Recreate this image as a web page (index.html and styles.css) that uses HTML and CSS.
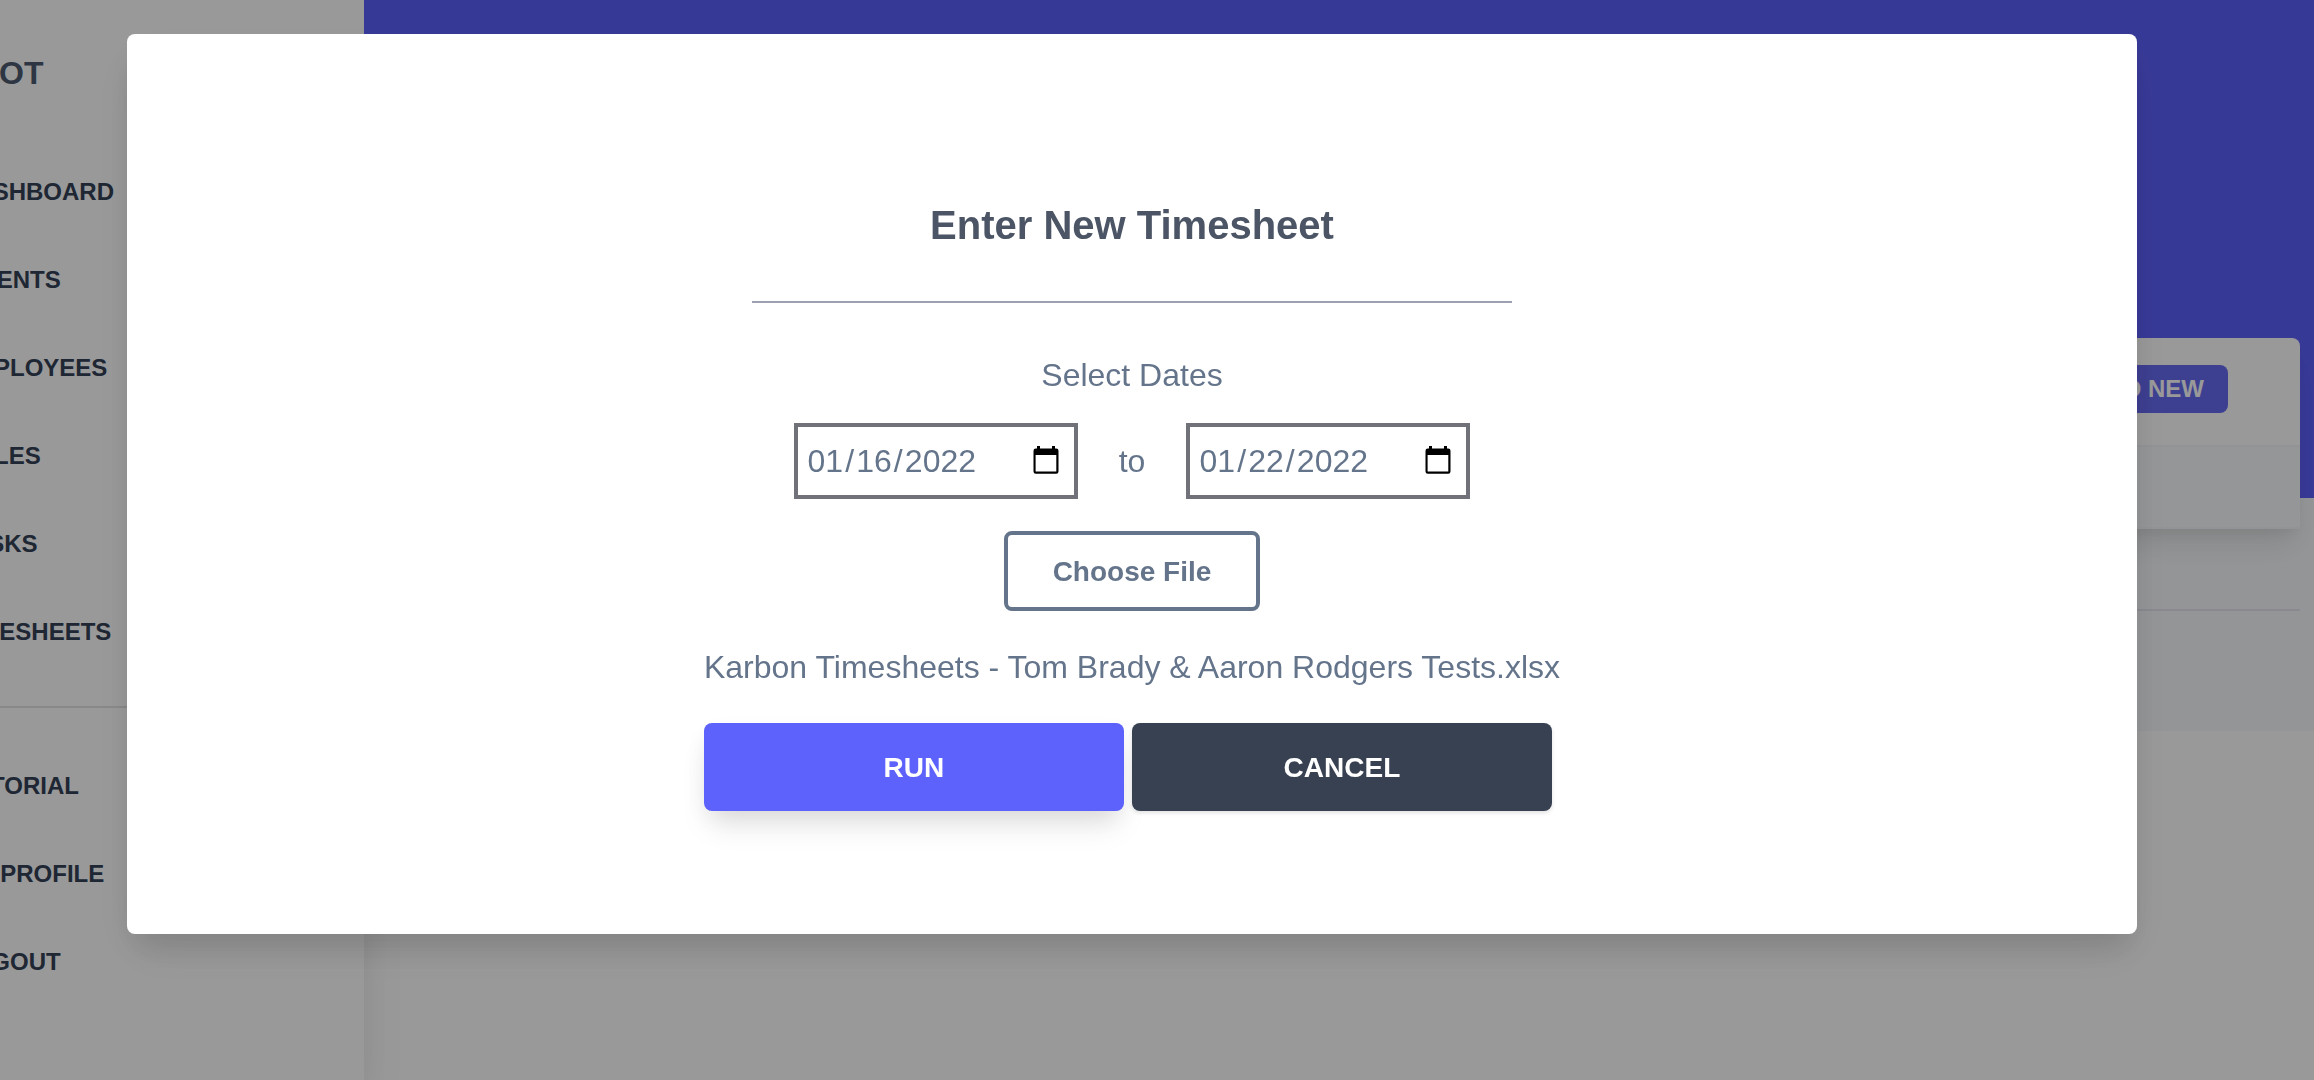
FILE: index.html
```html
<!DOCTYPE html>
<html lang="en">
<head>
<meta charset="utf-8">
<title>Timesheets</title>
<link rel="stylesheet" href="styles.css">
</head>
<body>
<div class="app">
  <nav class="sidebar">
    <div class="logo">BOT</div>
    <ul class="menu">
      <li>DASHBOARD</li>
      <li>CLIENTS</li>
      <li>EMPLOYEES</li>
      <li>ROLES</li>
      <li>TASKS</li>
      <li>TIMESHEETS</li>
    </ul>
    <hr class="divider">
    <ul class="menu">
      <li>TUTORIAL</li>
      <li>MY PROFILE</li>
      <li>LOGOUT</li>
    </ul>
  </nav>
  <main class="main">
    <div class="banner"></div>
    <div class="content">
      <section class="card">
        <header class="card-header"><span class="add">ADD NEW</span></header>
        <div class="card-row"></div>
      </section>
      <footer class="footer"></footer>
    </div>
  </main>
</div>
<div class="overlay">
  <div class="modal" role="dialog">
    <h1 class="title">Enter New Timesheet</h1>
    <hr class="rule">
    <p class="label">Select Dates</p>
    <div class="dates">
      <div class="date">
        <div class="value"><span>01</span><span class="slash">/</span><span>16</span><span class="slash">/</span><span>2022</span></div>
        <svg class="calendar" viewBox="0 0 26 28"><path fill-rule="evenodd" d="M4 0h3v2.500h12V0h3v2.500h1.200a2.300 2.300 0 0 1 2.300 2.300v20.700a2.300 2.300 0 0 1-2.300 2.300H2.800a2.300 2.300 0 0 1-2.300-2.300V4.800a2.300 2.300 0 0 1 2.300-2.300H4zM2.600 9v16.600h20.700V9z"/></svg>
      </div>
      <span class="to">to</span>
      <div class="date">
        <div class="value"><span>01</span><span class="slash">/</span><span>22</span><span class="slash">/</span><span>2022</span></div>
        <svg class="calendar" viewBox="0 0 26 28"><path fill-rule="evenodd" d="M4 0h3v2.500h12V0h3v2.500h1.200a2.300 2.300 0 0 1 2.300 2.300v20.700a2.300 2.300 0 0 1-2.300 2.300H2.800a2.300 2.300 0 0 1-2.300-2.300V4.800a2.300 2.300 0 0 1 2.300-2.300H4zM2.600 9v16.600h20.700V9z"/></svg>
      </div>
    </div>
    <button class="choose">Choose File</button>
    <div class="actions-group">
      <p class="filename">Karbon Timesheets - Tom Brady &amp; Aaron Rodgers Tests.xlsx</p>
      <div class="actions">
        <button class="btn run">RUN</button>
        <button class="btn cancel">CANCEL</button>
      </div>
    </div>
  </div>
</div>
</body>
</html>
```
FILE: styles.css
```css
* { box-sizing: border-box; margin: 0; padding: 0; }

body {
  width: 2314px;
  height: 1080px;
  overflow: hidden;
  background: #fff;
  font-family: "Liberation Sans", Arial, Helvetica, sans-serif;
  color: #64748b;
}

.app { display: flex; height: 1080px; }

.sidebar {
  width: 364px;
  flex: none;
  background: #fff;
  box-shadow: 0 40px 50px -10px rgba(0, 0, 0, .1), 0 0 30px rgba(0, 0, 0, .04);
}

.logo {
  height: 148px;
  line-height: 146px;
  margin-left: -24px;
  font-size: 32px;
  font-weight: 700;
  color: #4b5a6e;
}

.menu {
  list-style: none;
  margin-left: -42px;
  font-size: 24px;
  font-weight: 700;
  line-height: 88px;
  color: #334155;
}

.divider { border: 0; height: 2px; margin: 30px 0 34px; background: #e5e5e8; }

.main {
  flex: 1;
  position: relative;
  background: linear-gradient(#f7f9fb, #f7f9fb) 0 498px / 100% 233px no-repeat;
}

.banner { height: 498px; background: #5d60fb; }

.content { height: 393px; margin-top: -160px; }

.card {
  margin: 0 14px 0 30px;
  height: 191px;
  border-radius: 8px 8px 0 0;
  background: #fff;
  box-shadow: 0 20px 30px -6px rgba(0, 0, 0, .1), 0 8px 12px -4px rgba(0, 0, 0, .05);
}

.card-header {
  display: flex;
  justify-content: flex-end;
  height: 107px;
  padding: 27px 72px 0 0;
}

.add {
  height: 48px;
  line-height: 48px;
  padding: 0 24px;
  border-radius: 8px;
  background: #676af1;
  color: #fff;
  font-size: 24px;
  font-weight: 700;
}

.card-row {
  height: 84px;
  background: #f8fafc;
  border-top: 2px solid #f3f5f8;
  border-bottom: 2px solid #f5f6f9;
}

.footer { margin: 80px 14px 0 30px; border-top: 2px solid #e4e5ef; }

.overlay {
  position: fixed;
  inset: 0;
  padding: 34px 177px 0 127px;
  background: rgba(0, 0, 0, .4);
}

.modal {
  display: flex;
  flex-direction: column;
  align-items: center;
  height: 900px;
  padding-top: 161px;
  border-radius: 8px;
  background: #fff;
  box-shadow: 0 20px 30px -6px rgba(0, 0, 0, .1), 0 20px 50px -6px rgba(0, 0, 0, .08);
}

.title { line-height: 60px; font-size: 40px; color: #4b5565; }
.rule { width: 760px; height: 2px; border: 0; margin: 46px 0 48px; background: #9ca0b0; }
.label { font-size: 32px; line-height: 48px; margin-bottom: 24px; }

.dates { display: flex; align-items: center; font-size: 32px; line-height: 48px; }
.to { width: 108px; text-align: center; }

.date {
  display: flex;
  align-items: center;
  justify-content: space-between;
  width: 284px;
  height: 76px;
  padding: 0 15px 0 9.500px;
  border: 4px solid #71717a;
}

.value { display: flex; }
.slash { margin: 0 2.100px; }
.calendar { width: 26px; height: 28px; margin-bottom: 2px; fill: #000; }

.choose {
  width: 256px;
  height: 80px;
  margin: 32px 0;
  padding-top: 1px;
  border: 4px solid #64748b;
  border-radius: 8px;
  background: #fff;
  font: 700 28px "Liberation Sans", Arial, sans-serif;
  color: #64748b;
}

.filename { font-size: 32px; line-height: 48px; margin-bottom: 32px; white-space: nowrap; }
.actions { display: flex; gap: 8px; }

.btn {
  width: 420px;
  height: 88px;
  padding-top: 1px;
  border: 0;
  border-radius: 8px;
  color: #fff;
  font: 700 28px "Liberation Sans", Arial, sans-serif;
}

.run {
  background: #5d62fc;
  box-shadow: 0 20px 30px -6px rgba(0, 0, 0, .1), 0 8px 24px -4px rgba(0, 0, 0, .07);
}

.cancel { background: #384152; box-shadow: 0 2px 4px rgba(0, 0, 0, .12); }
```
